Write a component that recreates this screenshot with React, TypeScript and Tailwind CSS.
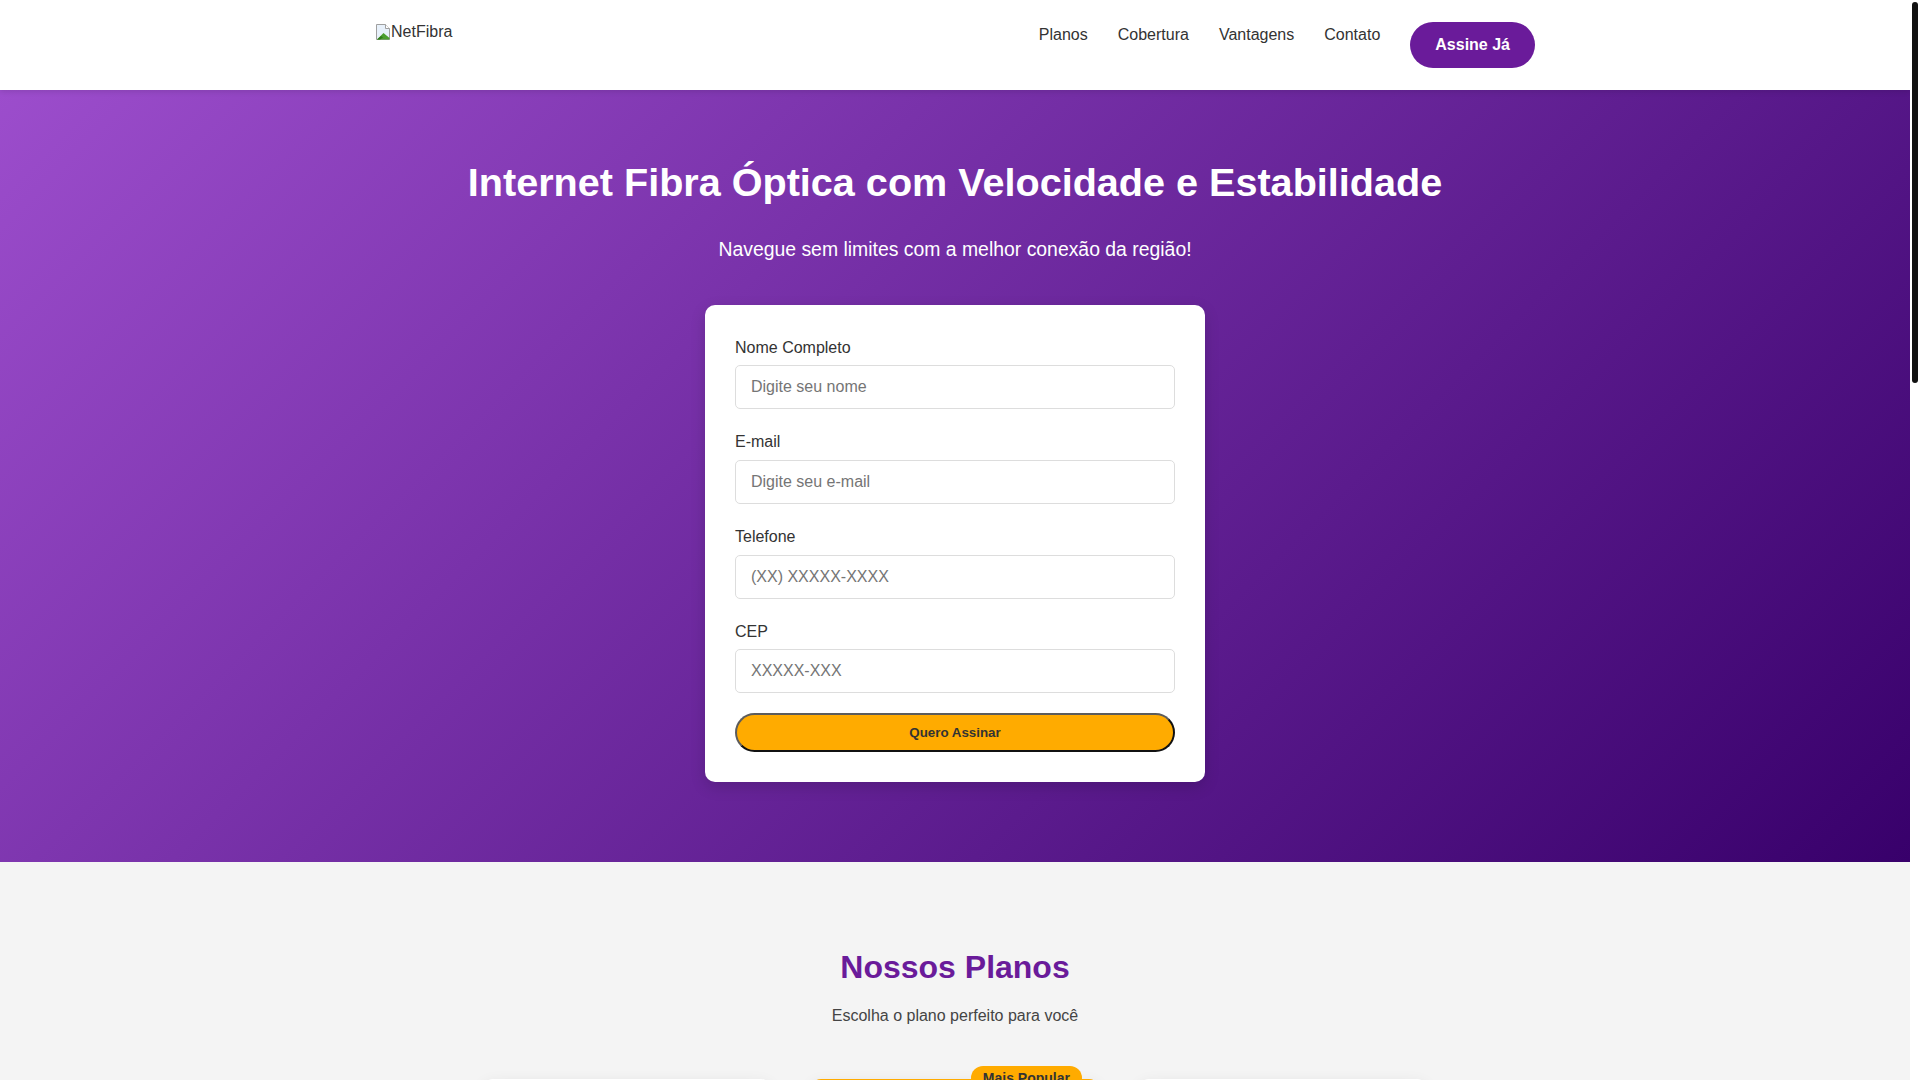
const plans = [
  {
    name: "Básico",
    speed: "300 Mega",
    price: "79,90",
    items: ["Wi-Fi grátis", "Instalação grátis", "Suporte 24h", "Sem franquia de dados"],
    popular: false,
  },
  {
    name: "Avançado",
    speed: "500 Mega",
    price: "99,90",
    items: ["Wi-Fi 6 grátis", "Instalação grátis", "Suporte 24h prioritário", "Sem franquia de dados"],
    popular: true,
  },
  {
    name: "Premium",
    speed: "1 Giga",
    price: "149,90",
    items: ["Wi-Fi 6 Mesh", "Instalação grátis", "Suporte VIP 24h", "IP fixo incluso"],
    popular: false,
  },
];

const perks = [
  { title: "100% Fibra Óptica", desc: "Conexão de ponta a ponta em fibra, sem interferências." },
  { title: "Ultra Velocidade", desc: "Downloads e streaming em alta definição sem travar." },
  { title: "Suporte Local", desc: "Atendimento rápido com técnicos da sua região." },
  { title: "Sem Fidelidade", desc: "Liberdade para ficar porque você gosta do serviço." },
];

function BrokenImage() {
  return (
    <svg width="16" height="18" viewBox="0 0 16 18" className="shrink-0">
      <path d="M1.5 1.5h9l4 4v11h-13z" fill="#e8f1fb" stroke="#a0a0a0" />
      <path d="M10.5 1.5v4h4" fill="#ffffff" stroke="#a0a0a0" />
      <path d="M2 16.5 8.5 10l6 5v1.5H2z" fill="#4b9e2f" />
      <path d="M2 16.5 6 13l2 1.5-3 2z" fill="#2f7a1a" />
    </svg>
  );
}

function Header() {
  return (
    <header className="relative z-10 bg-white shadow-[0_2px_5px_rgba(0,0,0,0.1)]">
      <div className="mx-auto flex max-w-[1200px] items-center justify-between px-5 py-5">
        <div className="h-[50px]">
          <div className="flex items-center pt-[3px] text-base leading-[18px] text-[#333]">
            <BrokenImage />
            <span>NetFibra</span>
          </div>
        </div>
        <ul className="flex">
          {["Planos", "Cobertura", "Vantagens", "Contato"].map((l) => (
            <li key={l} className="ml-[30px]">
              <a className="text-base text-[#333]">{l}</a>
            </li>
          ))}
          <li className="ml-[30px]">
            <a className="inline-block rounded-[25px] bg-[#6a1b9a] px-[25px] py-[10px] font-bold text-white">
              Assine Já
            </a>
          </li>
        </ul>
      </div>
    </header>
  );
}

function Field({ label, placeholder }: { label: string; placeholder: string }) {
  return (
    <div className="mb-5">
      <label className="mb-[5px] block text-[#333]">{label}</label>
      <input
        placeholder={placeholder}
        className="w-full rounded-[5px] border border-[#ddd] px-[15px] py-3 text-base leading-[normal] placeholder:text-[#757575]"
      />
    </div>
  );
}

function Hero() {
  return (
    <section className="bg-[linear-gradient(135deg,#9c4dcc,#38006b)] pt-[60px] pb-[80px] text-center text-white">
      <div className="mx-auto max-w-[1200px] px-5">
        <h1 className="mb-5 text-[39.6px] leading-[64px] font-bold">
          Internet Fibra Óptica com Velocidade e Estabilidade
        </h1>
        <p className="mb-10 text-[19.4px] leading-[30.72px]">Navegue sem limites com a melhor conexão da região!</p>
        <form className="mx-auto w-[500px] rounded-[10px] bg-white p-[30px] text-left shadow-[0_5px_15px_rgba(0,0,0,0.15)]">
          <Field label="Nome Completo" placeholder="Digite seu nome" />
          <Field label="E-mail" placeholder="Digite seu e-mail" />
          <Field label="Telefone" placeholder="(XX) XXXXX-XXXX" />
          <Field label="CEP" placeholder="XXXXX-XXX" />
          <button
            type="button"
            className="w-full rounded-[25px] border-2 border-solid border-t-[#5c5c5c] border-r-[#111] border-b-[#111] border-l-[#5c5c5c] bg-[#ffab00] p-[10px] text-[13.333px] font-bold leading-[normal] text-[#333]"
          >
            Quero Assinar
          </button>
        </form>
      </div>
    </section>
  );
}

function Plans() {
  return (
    <section className="bg-[#f4f4f4] py-20 text-center">
      <h2 className="mb-[10px] text-[32px] font-bold text-[#6a1b9a]">Nossos Planos</h2>
      <p className="mb-[50px] text-[#444]">Escolha o plano perfeito para você</p>
      <div className="flex justify-center gap-10">
        {plans.map((p) => (
          <div
            key={p.name}
            className={
              p.popular
                ? "relative w-[288px] rounded-[10px] border-2 border-[#ffab00] bg-white px-6 py-8 shadow-[0_5px_15px_rgba(0,0,0,0.1)]"
                : "relative w-[288px] rounded-[10px] border-2 border-white bg-white px-6 py-8 shadow-[0_5px_15px_rgba(0,0,0,0.1)]"
            }
          >
            {p.popular && (
              <span className="absolute -top-[15px] right-[15px] rounded-full bg-[#ffab00] px-3 py-[2px] text-sm font-bold text-[#333]">
                Mais Popular
              </span>
            )}
            <h3 className="text-2xl font-bold text-[#333]">{p.name}</h3>
            <div className="mt-3 text-[40px] font-bold text-[#6a1b9a]">{p.speed}</div>
            <div className="mt-2 text-[#555]">
              R$ <span className="text-[28px] font-bold text-[#333]">{p.price}</span>/mês
            </div>
            <ul className="mt-6 border-t border-[#eee] pt-4">
              {p.items.map((i) => (
                <li key={i} className="border-b border-[#eee] py-2 text-[#555]">
                  {i}
                </li>
              ))}
            </ul>
            <a className="mt-8 inline-block rounded-[25px] bg-[#6a1b9a] px-[30px] py-[10px] font-bold text-white">
              Assinar agora
            </a>
          </div>
        ))}
      </div>
    </section>
  );
}

function Perks() {
  return (
    <section className="bg-white py-20 text-center">
      <div className="mx-auto max-w-[1200px] px-5">
        <h2 className="mb-[10px] text-[32px] font-bold text-[#6a1b9a]">Vantagens</h2>
        <p className="mb-[50px] text-[#444]">Por que escolher a NetFibra?</p>
        <div className="grid grid-cols-4 gap-[30px]">
          {perks.map((k) => (
            <div key={k.title} className="rounded-[10px] bg-[#f4f4f4] p-[30px]">
              <div className="mx-auto mb-4 flex h-[60px] w-[60px] items-center justify-center rounded-full bg-[#6a1b9a] text-2xl font-bold text-white">
                ✓
              </div>
              <h3 className="mb-2 text-xl font-bold text-[#333]">{k.title}</h3>
              <p className="text-[#555]">{k.desc}</p>
            </div>
          ))}
        </div>
      </div>
    </section>
  );
}

function Coverage() {
  return (
    <section className="bg-[#f4f4f4] py-20 text-center">
      <div className="mx-auto max-w-[1200px] px-5">
        <h2 className="mb-[10px] text-[32px] font-bold text-[#6a1b9a]">Cobertura</h2>
        <p className="mb-[40px] text-[#444]">Verifique se a NetFibra já chegou ao seu endereço</p>
        <div className="mx-auto flex w-[500px] gap-3">
          <input
            placeholder="Digite seu CEP"
            className="flex-1 rounded-[5px] border border-[#ddd] bg-white px-[15px] py-3 leading-[normal] placeholder:text-[#757575]"
          />
          <a className="rounded-[25px] bg-[#ffab00] px-[25px] py-[10px] font-bold text-[#333]">Verificar</a>
        </div>
        <div className="mt-12 grid grid-cols-3 gap-[30px] text-left">
          {["Centro", "Zona Norte", "Zona Sul", "Jardim América", "Vila Nova", "Bairro Alto"].map((b) => (
            <div key={b} className="rounded-[10px] bg-white px-6 py-5 text-[#333]">
              <span className="font-bold text-[#6a1b9a]">●</span> {b}
            </div>
          ))}
        </div>
      </div>
    </section>
  );
}

function Contact() {
  return (
    <section className="bg-white py-20 text-center">
      <div className="mx-auto max-w-[1200px] px-5">
        <h2 className="mb-[10px] text-[32px] font-bold text-[#6a1b9a]">Contato</h2>
        <p className="mb-[40px] text-[#444]">Fale com a nossa equipe</p>
        <div className="grid grid-cols-3 gap-[30px]">
          {[
            ["Telefone", "(11) 4002-8922"],
            ["WhatsApp", "(11) 99999-0000"],
            ["E-mail", "contato@netfibra.com.br"],
          ].map(([t, v]) => (
            <div key={t} className="rounded-[10px] bg-[#f4f4f4] p-[30px]">
              <h3 className="mb-2 text-xl font-bold text-[#333]">{t}</h3>
              <p className="text-[#555]">{v}</p>
            </div>
          ))}
        </div>
      </div>
    </section>
  );
}

export default function App() {
  return (
    <div className="flex h-screen bg-white font-['Liberation_Sans',Arial,sans-serif] leading-[1.6] text-[#333]">
      <div className="min-w-0 flex-1 overflow-y-auto">
        <Header />
        <Hero />
        <Plans />
        <Perks />
        <Coverage />
        <Contact />
        <footer className="bg-[#38006b] py-10 text-center text-sm text-white/80">
          © 2024 NetFibra. Todos os direitos reservados.
        </footer>
      </div>
      {/* scrollbar track */}
      <div className="w-[10px] shrink-0 bg-white px-[2px] pt-[2px]">
        <div className="h-[381px] rounded-full bg-[#111]" />
      </div>
    </div>
  );
}
